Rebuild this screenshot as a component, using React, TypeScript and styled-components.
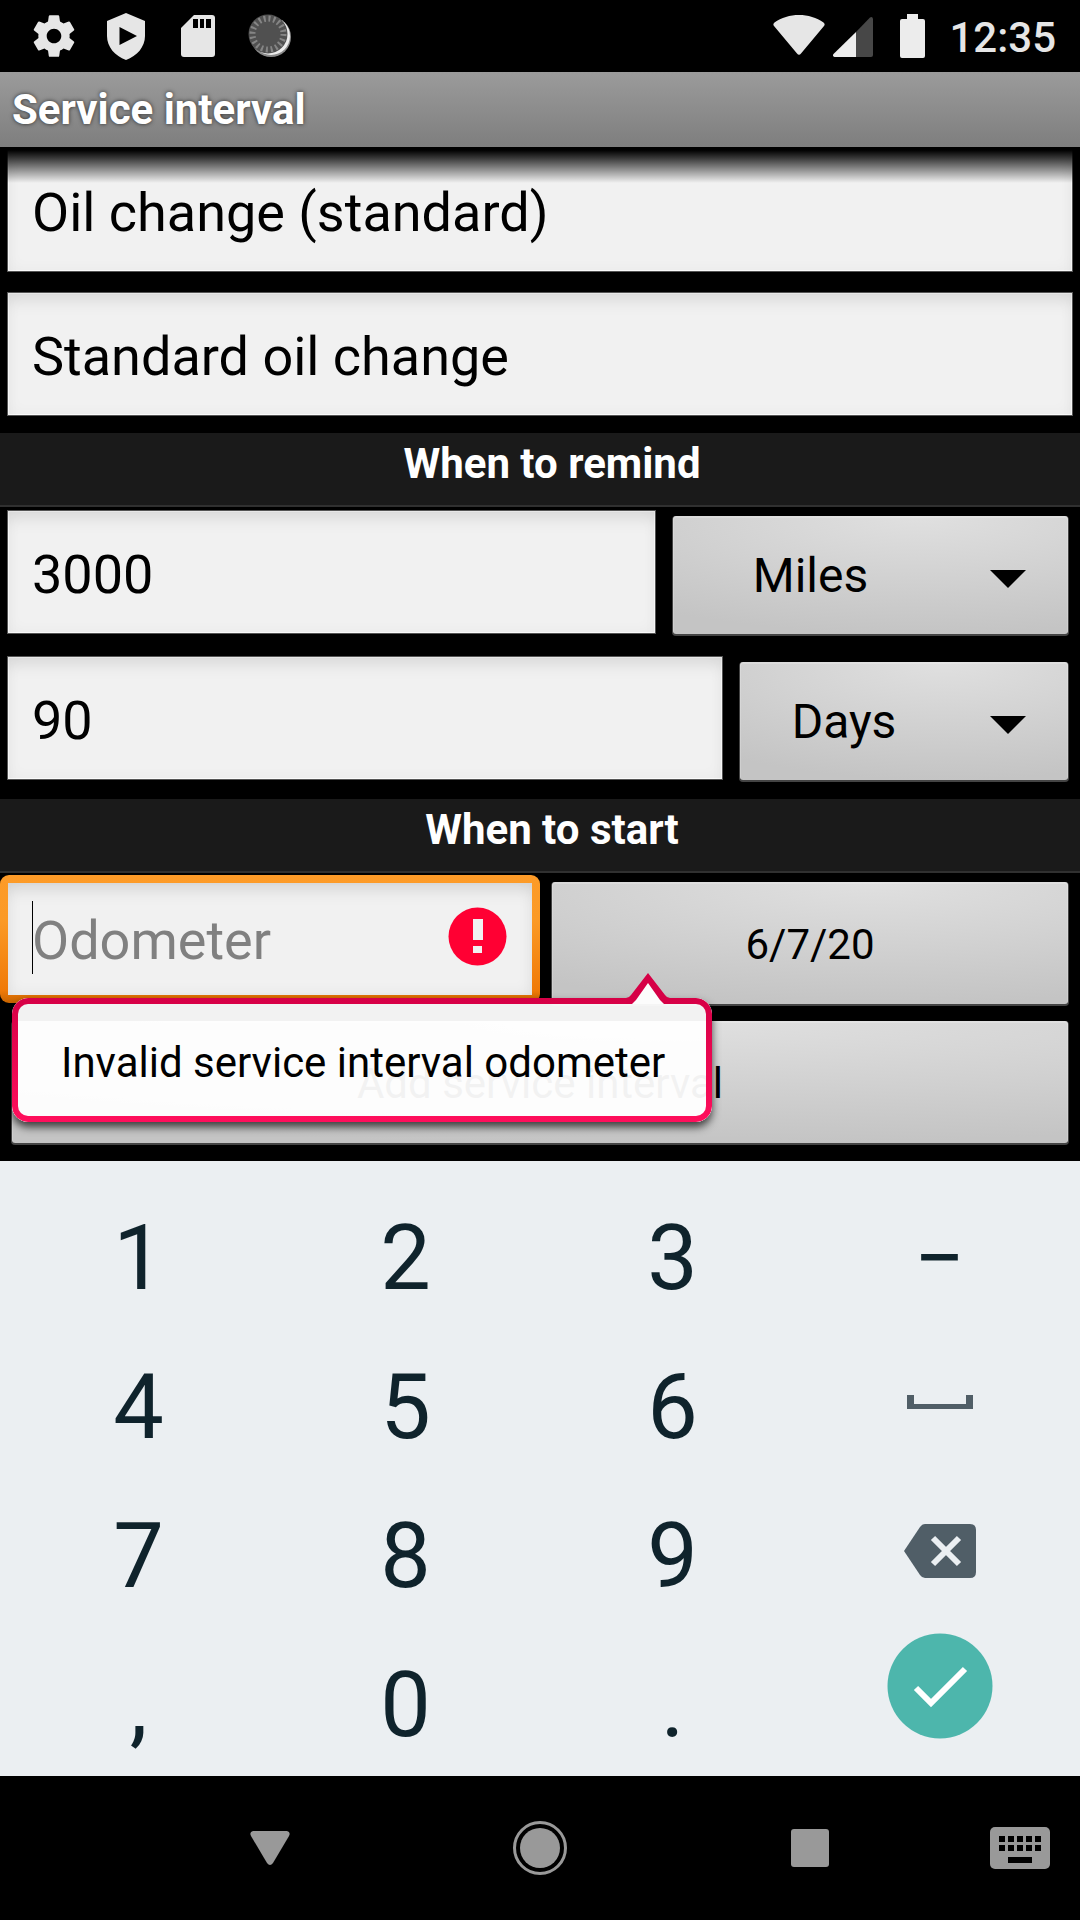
import React from 'react';
import styled, { createGlobalStyle, css } from 'styled-components';

const GlobalStyle = createGlobalStyle`
  *, *::before, *::after { box-sizing: border-box; }
  body { margin: 0; background: #000; font-family: Roboto, "Noto Sans", sans-serif; }
  button, input, select { font-family: inherit; margin: 0; border: 0; border-radius: 0; outline: 0; }
  svg { display: block; }
`;

const Screen = styled.div`
  display: flex;
  flex-direction: column;
  min-height: 100vh;
  background: #000;
`;

const StatusBar = styled.header`
  display: flex;
  align-items: center;
  justify-content: space-between;
  height: 72px;
  padding: 0 24px 0 30px;
`;

const Notifications = styled.div`
  display: flex;
  gap: 24px;
`;

const SystemIcons = styled.div`
  display: flex;
  align-items: center;
  gap: 8px;
`;

const Clock = styled.time`
  padding-top: 4px;
  font-size: 42px;
  font-weight: 500;
  line-height: 48px;
  color: #e6e6e6;
`;

const TitleBar = styled.h1`
  margin: 0;
  padding: 0 12px;
  font-size: 42px;
  font-weight: 700;
  line-height: 75px;
  color: #fff;
  text-shadow: 0 0 4px rgba(0, 0, 0, 0.7);
  background: linear-gradient(#9b9b9b, #7e7e7e);
`;

const Form = styled.form`
  position: relative;
  display: flex;
  flex-direction: column;
  flex: 1;
  padding: 2px 0 18px;

  &::before {
    content: '';
    position: absolute;
    z-index: 1;
    inset: 0 0 auto;
    height: 36px;
    background: linear-gradient(#000, #000 3px, rgba(0, 0, 0, 0));
  }
`;

const FieldGroup = styled.div`
  display: flex;
  flex-direction: column;
  gap: 22px;
  padding: 0 8px 18px;
`;

const textBox = css`
  width: 100%;
  min-width: 0;
  font-size: 54px;
  line-height: 64px;
  color: #000;
  background: #f1f1f1;
`;

const TextField = styled.input`
  ${textBox}
  height: 122px;
  padding: 5px 24px 0;
  box-shadow: inset 0 14px 18px -8px rgba(0, 0, 0, 0.1), inset 0 0 16px rgba(0, 0, 0, 0.04),
    inset 0 0 0 1px #fff, 0 0 0 1px #555;
`;

const SectionTitle = styled.h2`
  margin: 0;
  padding: 1px 0 11px 24px;
  font-size: 42px;
  font-weight: 700;
  line-height: 60px;
  text-align: center;
  color: #fff;
  background: #1a1a1a;
  border-bottom: 2px solid #303030;
`;

const Rows = styled.div`
  display: flex;
  flex-direction: column;
  gap: 22px;
  padding: 4px 12px 18px 8px;
`;

const Row = styled.div`
  display: flex;
  gap: 18px;
  height: 124px;
`;

const raised = css`
  color: #000;
  background: radial-gradient(ellipse 110% 100% at 62% 0, #e0e0e0, #c4c4c4);
  border-radius: 3px;
  box-shadow: inset 0 1px 0 1px rgba(255, 255, 255, 0.2), 0 1px 0 1px #444;
`;

const Spinner = styled.div<{ $width: number }>`
  position: relative;
  flex: none;
  width: ${(p) => p.$width}px;
  padding-top: 5px;

  svg {
    position: absolute;
    top: 58px;
    right: 41px;
    pointer-events: none;
  }
`;

const SpinnerSelect = styled.select`
  ${raised}
  appearance: none;
  width: 100%;
  height: 118px;
  padding: 0 120px 0 0;
  font-size: 48px;
  text-align: center;
  text-align-last: center;
`;

const StartRow = styled.div`
  display: grid;
  grid-template-columns: 1fr 1fr;
  padding-top: 2px;
`;

const OdometerBox = styled.div`
  position: relative;
  height: 128px;
  padding: 8px;
  border-radius: 9px;
  background: linear-gradient(#fd9b28, #fb9a26 35%, #f07a08 90%, #c86400);
`;

const OdometerField = styled.input`
  ${textBox}
  height: 112px;
  padding: 3px 110px 0 24px;
  caret-color: transparent;
  box-shadow: inset 0 14px 18px -8px rgba(0, 0, 0, 0.1), inset 0 0 16px rgba(0, 0, 0, 0.06);

  &::placeholder {
    color: #808080;
    opacity: 1;
  }
`;

const Caret = styled.span`
  position: absolute;
  top: 26px;
  left: 32px;
  width: 1px;
  height: 73px;
  background: #000;
`;

const ErrorMark = styled.span`
  position: absolute;
  top: 32px;
  right: 33px;
`;

const ErrorPopup = styled.div`
  position: absolute;
  z-index: 2;
  top: 123px;
  left: 12px;
  height: 124px;
  padding: 4px 47px 0 49px;
  font-size: 42px;
  line-height: 122px;
  white-space: nowrap;
  color: #000;
  border-radius: 16px;
  background: rgba(255, 255, 255, 0.95);
  box-shadow: 0 5px 8px rgba(0, 0, 0, 0.7);

  &::before {
    content: '';
    position: absolute;
    inset: 0;
    padding: 6px;
    border-radius: 16px;
    background: linear-gradient(#d60046, #ff0f5c);
    mask: linear-gradient(#000 0 0) content-box exclude, linear-gradient(#000 0 0);
  }

  svg {
    position: absolute;
    top: -26px;
    right: 42px;
  }
`;

const FlatButton = styled.button`
  ${raised}
  flex: 1;
  min-height: 122px;
  padding: 4px 0 0;
  font-size: 42px;
  line-height: 60px;
`;

const DateSlot = styled.div`
  display: flex;
  padding: 7px 12px 0;
`;

const SubmitRow = styled.div`
  display: flex;
  padding: 17px 12px 0;
`;

const Keyboard = styled.section`
  display: grid;
  grid-template-columns: repeat(4, 1fr);
  grid-template-rows: repeat(3, 149px) 146px;
  padding: 22px 7px 0 5px;
  background: #ebeff2;
`;

const Key = styled.button<{ $box?: number }>`
  display: flex;
  align-items: flex-start;
  justify-content: center;
  padding: 0;
  font-size: 90px;
  line-height: 152px;
  color: #0f232c;
  background: transparent;

  svg {
    height: ${(p) => p.$box ?? 140}px;
  }
`;

const NavBar = styled.nav`
  display: grid;
  grid-template-columns: 1fr 2fr 2fr 2fr 1fr;
  height: 144px;
  background: #000;
`;

const NavButton = styled.button<{ $end?: boolean }>`
  display: flex;
  align-items: center;
  justify-content: ${(p) => (p.$end ? 'flex-end' : 'center')};
  padding: 0 ${(p) => (p.$end ? 30 : 0)}px 0 0;
  color: #999;
  background: transparent;
`;

const LIGHT = '#e6e6e6';

const GearIcon = () => (
  <svg width="48" height="48" viewBox="0.5 0.5 23 23" fill={LIGHT}>
    <path d="M19.43 12.98c.04-.32.07-.64.07-.98s-.03-.66-.07-.98l2.11-1.65c.19-.15.24-.42.12-.64l-2-3.46c-.12-.22-.39-.3-.61-.22l-2.49 1c-.52-.4-1.08-.73-1.69-.98l-.38-2.65A.49.49 0 0 0 14 2h-4c-.25 0-.46.18-.49.42l-.38 2.65c-.61.25-1.17.59-1.69.98l-2.49-1c-.23-.09-.49 0-.61.22l-2 3.46c-.13.22-.07.49.12.64l2.11 1.65c-.04.32-.07.65-.07.98s.03.66.07.98l-2.11 1.65c-.19.15-.24.42-.12.64l2 3.46c.12.22.39.3.61.22l2.49-1c.52.4 1.08.73 1.69.98l.38 2.65c.03.24.24.42.49.42h4c.25 0 .46-.18.49-.42l.38-2.65c.61-.25 1.17-.59 1.69-.98l2.49 1c.23.09.49 0 .61-.22l2-3.46c.12-.22.07-.49-.12-.64l-2.11-1.65zM12 15.5c-1.93 0-3.500-1.57-3.500-3.500s1.57-3.500 3.500-3.500 3.500 1.57 3.500 3.500-1.57 3.500-3.500 3.500z" />
  </svg>
);

const ShieldIcon = () => (
  <svg width="48" height="48" viewBox="0 0 48 48" fill={LIGHT}>
    <path
      fillRule="evenodd"
      d="M24 1 43 9V24C43 35 35 44 24 48 13 44 5 35 5 24V9ZM17.500 15V33L35 24Z"
    />
  </svg>
);

const SdIcon = () => (
  <svg width="48" height="48" viewBox="0 0 48 48">
    <path
      fill={LIGHT}
      d="M20 3H38Q41 3 41 6V42Q41 45 38 45H10Q7 45 7 42V16Z"
    />
    <path d="M19 7h5v9h-5zM26 7h4v9h-4zM32 7h5v9h-5z" fill="#000" />
  </svg>
);

const SyncIcon = () => (
  <svg width="48" height="48" viewBox="0 0 48 48">
    <circle cx="25" cy="25" r="20" fill="#8a8a8a" />
    <circle cx="25" cy="24" r="19" fill="#ededed" />
    <circle cx="22" cy="22" r="19.500" fill="#505050" />
    <circle
      cx="22"
      cy="22"
      r="15.500"
      fill="none"
      stroke="#858585"
      strokeWidth="6"
      strokeDasharray="2 2.870"
    />
  </svg>
);

const WifiIcon = () => (
  <svg width="52" height="48" viewBox="0 0 52 48" fill={LIGHT}>
    <path d="M1.500 10.500C15 .5 37 .5 50.500 10.500Q52.500 12 51 14L28 41.500Q26 44 24 41.500L1 14Q-.5 12 1.500 10.500Z" />
  </svg>
);

const SignalIcon = () => (
  <svg width="40" height="48" viewBox="0 0 40 48">
    <path d="M23 20V45H1.500Q-1 44 .5 42Z" fill="#ececec" />
    <path d="M23 20 37 5.500Q39.500 4 40 7V43Q40 45 38 45H23Z" fill="#474747" />
  </svg>
);

const BatteryIcon = () => (
  <svg width="60" height="48" viewBox="0 0 60 48" fill="#ececec">
    <path d="M26 2H37V7H42Q44 7 44 9V44Q44 46 42 46H21Q19 46 19 44V9Q19 7 21 7H26Z" />
  </svg>
);

const DropArrow = () => (
  <svg width="38" height="20" viewBox="0 0 38 20">
    <path d="M1 1H37L19 19Z" />
  </svg>
);

function UnitSpinner({ id, label, width, options }: { id: string; label: string; width: number; options: string[] }) {
  return (
    <Spinner $width={width}>
      <SpinnerSelect id={id} aria-label={label} defaultValue={options[0]}>
        {options.map((option) => (
          <option key={option}>{option}</option>
        ))}
      </SpinnerSelect>
      <DropArrow />
    </Spinner>
  );
}

const SpaceIcon = () => (
  <svg width="68" height="140" viewBox="0 0 68 140">
    <path d="M1 63H8V72H60V63H67V77H1Z" fill="#505e67" />
  </svg>
);

const BackspaceIcon = () => (
  <svg width="72" height="140" viewBox="0 0 72 140">
    <path d="M0 70 16 46Q18 43 21 43H66Q72 43 72 49V91Q72 97 66 97H21Q18 97 16 94Z" fill="#505e67" />
    <path d="M29 57 55 83M55 57 29 83" stroke="#ebeff2" strokeWidth="6" />
  </svg>
);

const EnterIcon = () => (
  <svg width="106" height="112" viewBox="0 0 106 112">
    <circle cx="53" cy="56" r="52.500" fill="#4db6ac" />
    <path d="M29 58 44 73 78 39" fill="none" stroke="#fff" strokeWidth="6" />
  </svg>
);

const keys: { label: string; face: React.ReactNode; box?: number }[] = [
  { label: '1', face: '1' },
  { label: '2', face: '2' },
  { label: '3', face: '3' },
  { label: 'Minus', face: '−' },
  { label: '4', face: '4' },
  { label: '5', face: '5' },
  { label: '6', face: '6' },
  { label: 'Space', face: <SpaceIcon /> },
  { label: '7', face: '7' },
  { label: '8', face: '8' },
  { label: '9', face: '9' },
  { label: 'Delete', face: <BackspaceIcon /> },
  { label: 'Comma', face: ',' },
  { label: '0', face: '0' },
  { label: 'Period', face: '.' },
  { label: 'Done', face: <EnterIcon />, box: 112 },
];

export default function App() {
  return (
    <Screen>
      <GlobalStyle />
      <StatusBar>
        <Notifications>
          <GearIcon />
          <ShieldIcon />
          <SdIcon />
          <SyncIcon />
        </Notifications>
        <SystemIcons>
          <WifiIcon />
          <SignalIcon />
          <BatteryIcon />
          <Clock>12:35</Clock>
        </SystemIcons>
      </StatusBar>
      <TitleBar>Service interval</TitleBar>

      <Form onSubmit={(e) => e.preventDefault()}>
        <FieldGroup>
          <TextField aria-label="Title" defaultValue="Oil change (standard)" />
          <TextField aria-label="Description" defaultValue="Standard oil change" />
        </FieldGroup>

        <SectionTitle>When to remind</SectionTitle>
        <Rows>
          <Row>
            <TextField aria-label="Distance" inputMode="numeric" defaultValue="3000" />
            <UnitSpinner id="distance-unit" label="Distance unit" width={395} options={['Miles', 'Kilometers']} />
          </Row>
          <Row>
            <TextField aria-label="Duration" inputMode="numeric" defaultValue="90" />
            <UnitSpinner id="time-unit" label="Time unit" width={328} options={['Days', 'Months', 'Years']} />
          </Row>
        </Rows>

        <SectionTitle>When to start</SectionTitle>
        <StartRow>
          <OdometerBox>
            <OdometerField
              aria-label="Odometer"
              aria-invalid="true"
              aria-describedby="odometer-error"
              inputMode="numeric"
              placeholder="Odometer"
            />
            <Caret />
            <ErrorMark>
              <svg width="59" height="59" viewBox="0 0 59 59">
                <circle cx="29.500" cy="29.500" r="29" fill="#ff0033" />
                <path d="M25 12h10v21H25zM25 39h9v7h-9z" fill="#f1f1f1" />
              </svg>
            </ErrorMark>
            <ErrorPopup id="odometer-error" role="alert">
              Invalid service interval odometer
              <svg width="44" height="32" viewBox="0 0 44 32">
                <path d="M0 26Q3 26 5 23L22 1 39 23Q41 26 44 26V32H0Z" fill="#d60046" />
                <path d="M6 32Q8 30 10 28L22 11 34 28Q36 30 38 32Z" fill="#fcfcfc" />
              </svg>
            </ErrorPopup>
          </OdometerBox>
          <DateSlot>
            <FlatButton type="button">6/7/20</FlatButton>
          </DateSlot>
        </StartRow>
        <SubmitRow>
          <FlatButton type="submit">Add service interval</FlatButton>
        </SubmitRow>
      </Form>

      <Keyboard aria-label="Keyboard">
        {keys.map((key) => (
          <Key key={key.label} type="button" aria-label={key.label} $box={key.box}>
            {key.face}
          </Key>
        ))}
      </Keyboard>

      <NavBar>
        <span />
        <NavButton type="button" aria-label="Back">
          <svg width="42" height="36" viewBox="0 0 42 36" fill="currentColor">
            <path d="M4 1H38Q42 2 40 6L24 33Q21 37 18 33L2 6Q0 2 4 1Z" />
          </svg>
        </NavButton>
        <NavButton type="button" aria-label="Home">
          <svg width="56" height="56" viewBox="0 0 56 56">
            <circle cx="28" cy="28" r="25.500" fill="none" stroke="currentColor" strokeWidth="3" />
            <circle cx="28" cy="28" r="20" fill="currentColor" />
          </svg>
        </NavButton>
        <NavButton type="button" aria-label="Recent apps">
          <svg width="38" height="38" viewBox="0 0 38 38" fill="currentColor">
            <rect width="38" height="38" rx="3" />
          </svg>
        </NavButton>
        <NavButton type="button" aria-label="Switch keyboard" $end>
          <svg width="60" height="42" viewBox="0 0 60 42" fill="currentColor">
            <rect width="60" height="42" rx="5" />
            <path
              fill="#000"
              d="M9 9h6v6H9zM18 9h6v6h-6zM27 9h6v6h-6zM36 9h6v6h-6zM45 9h6v6h-6zM9 18h6v6H9zM18 18h6v6h-6zM27 18h6v6h-6zM36 18h6v6h-6zM45 18h6v6h-6zM18 30h24v6H18z"
            />
          </svg>
        </NavButton>
      </NavBar>
    </Screen>
  );
}
